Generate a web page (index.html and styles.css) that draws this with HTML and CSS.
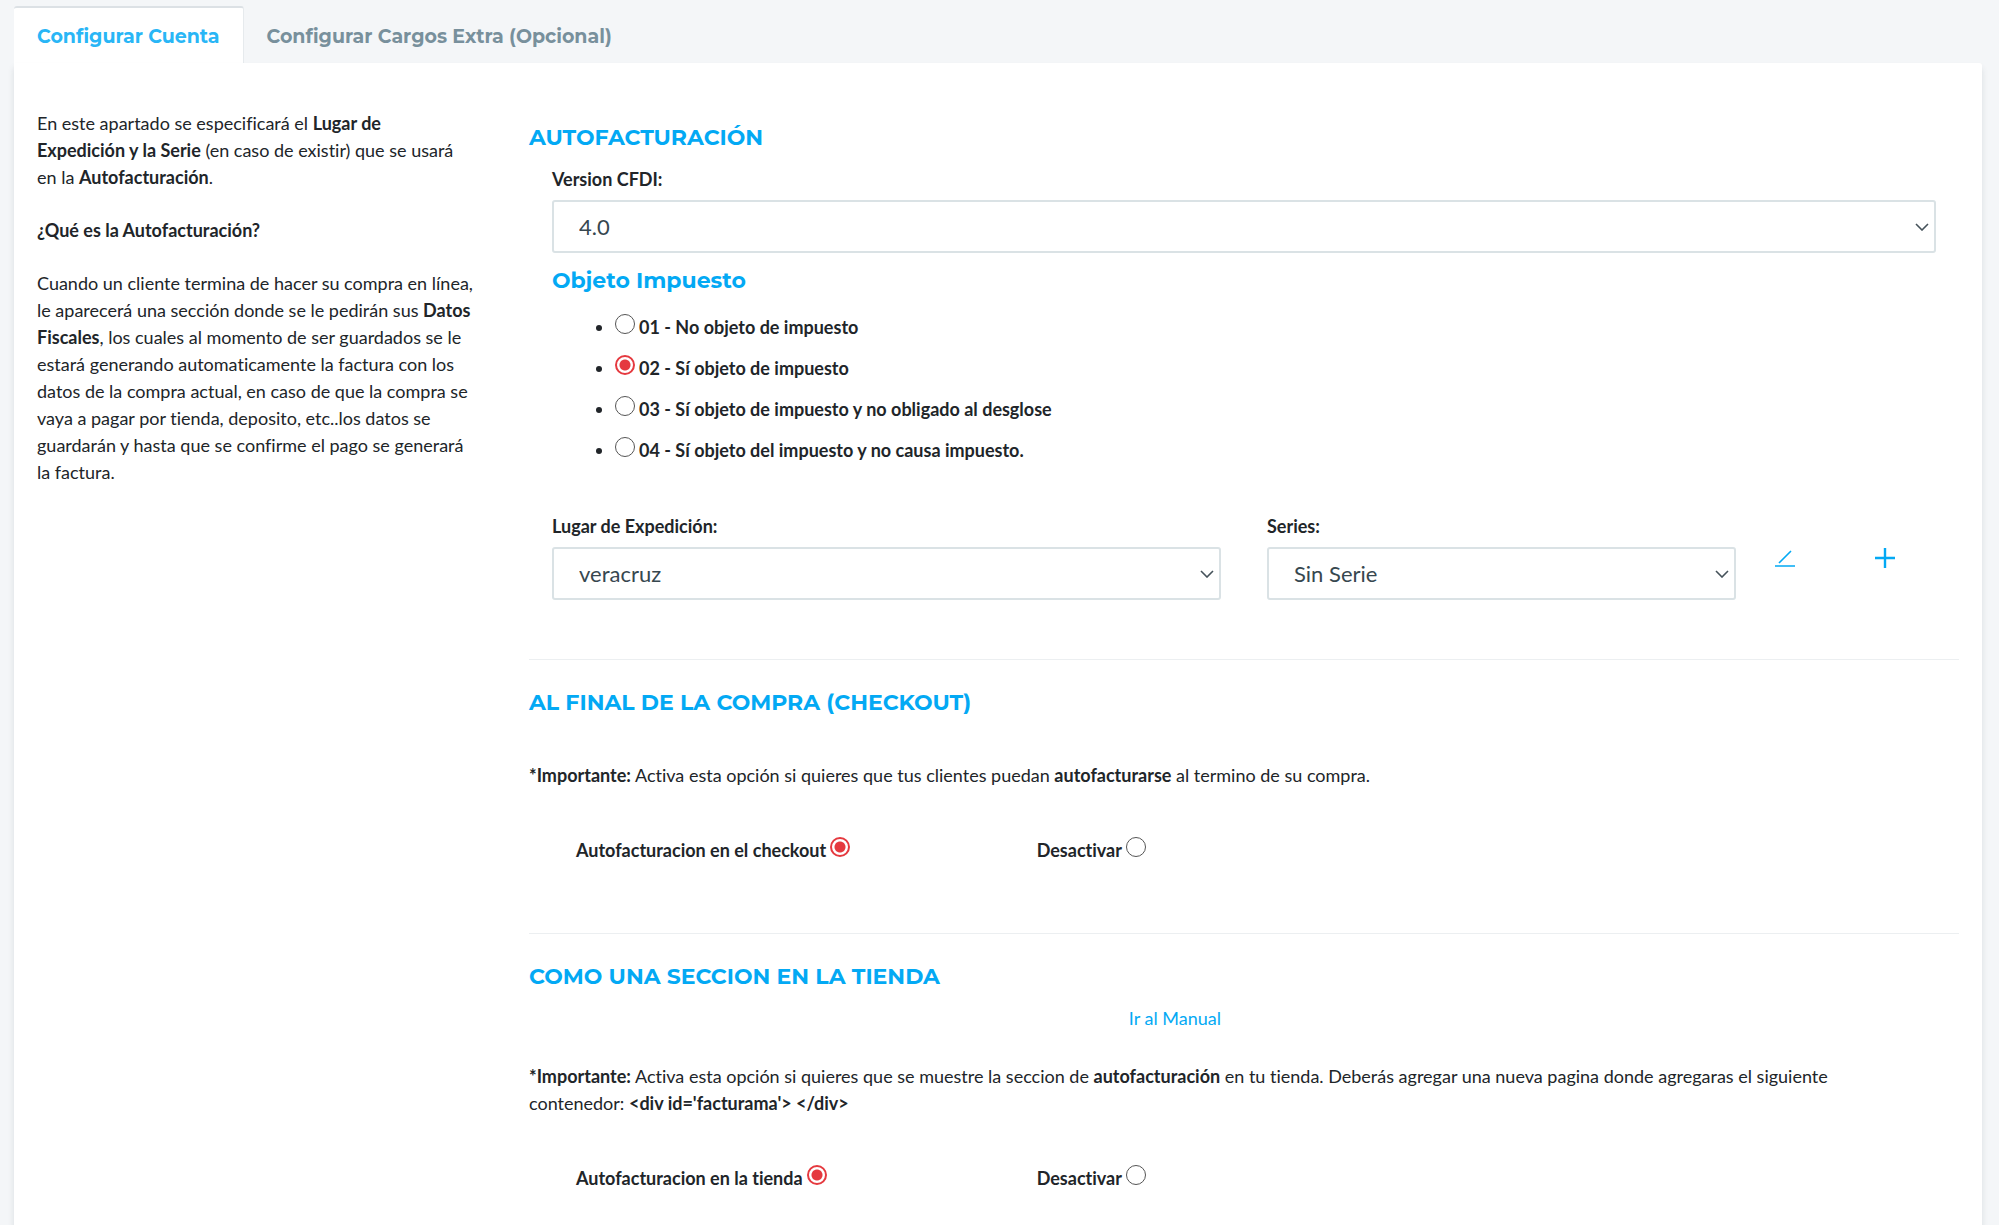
FILE: index.html
```html
<!DOCTYPE html>
<html lang="es">
<head>
  <meta charset="utf-8">
  <meta name="viewport" content="width=device-width, initial-scale=1">
  <title>Configurar Cuenta</title>
  <link rel="stylesheet" href="styles.css">
</head>
<body>
  <nav class="tabs">
    <a class="tab tab-active" href="#cuenta">Configurar Cuenta</a>
    <a class="tab" href="#cargos">Configurar Cargos Extra (Opcional)</a>
  </nav>

  <main class="card" id="cuenta">
    <aside class="help">
      <p>En este apartado se especificará el <b>Lugar de<br>Expedición y la Serie</b> (en caso de existir) que se usará<br>en la <b>Autofacturación</b>.</p>
      <p><b>¿Qué es la Autofacturación?</b></p>
      <p>Cuando un cliente termina de hacer su compra en línea, le aparecerá una sección donde se le pedirán sus <b>Datos Fiscales</b>, los cuales al momento de ser guardados se le estará generando automaticamente la factura con los datos de la compra actual, en caso de que la compra se vaya a pagar por tienda, deposito, etc..los datos se guardarán y hasta que se confirme el pago se generará<br>la factura.</p>
    </aside>

    <form class="content">
      <section class="section">
        <h2 class="title">AUTOFACTURACIÓN</h2>
        <div class="block">
          <label class="label" for="version">Version CFDI:</label>
          <div class="select-box">
            <select class="select" id="version"><option>4.0</option></select>
            <svg class="chevron" viewBox="0 0 14 8"><path d="M1 1l6 6 6-6"/></svg>
          </div>
          <h3 class="title subtitle">Objeto Impuesto</h3>
          <ul class="options">
            <li><label class="option"><input class="radio" type="radio" name="objeto"><span>01 - No objeto de impuesto</span></label></li>
            <li><label class="option"><input class="radio" type="radio" name="objeto" checked><span>02 - Sí objeto de impuesto</span></label></li>
            <li><label class="option"><input class="radio" type="radio" name="objeto"><span>03 - Sí objeto de impuesto y no obligado al desglose</span></label></li>
            <li><label class="option"><input class="radio" type="radio" name="objeto"><span>04 - Sí objeto del impuesto y no causa impuesto.</span></label></li>
          </ul>
        </div>
        <div class="series-row">
          <div class="field">
            <label class="label" for="lugar">Lugar de Expedición:</label>
            <div class="select-box">
              <select class="select" id="lugar"><option>veracruz</option></select>
              <svg class="chevron" viewBox="0 0 14 8"><path d="M1 1l6 6 6-6"/></svg>
            </div>
          </div>
          <div class="field">
            <label class="label" for="series">Series:</label>
            <div class="select-box">
              <select class="select" id="series"><option>Sin Serie</option></select>
              <svg class="chevron" viewBox="0 0 14 8"><path d="M1 1l6 6 6-6"/></svg>
            </div>
          </div>
          <button class="icon-button" type="button" aria-label="Editar serie">
            <svg class="icon" viewBox="0 0 22 22"><path d="M5 16L17 4M1 19h20"/></svg>
          </button>
          <button class="icon-button" type="button" aria-label="Agregar serie">
            <svg class="icon icon-add" viewBox="0 0 22 22"><path d="M1 11h20M11 1v20"/></svg>
          </button>
        </div>
      </section>

      <section class="section">
        <h2 class="title">AL FINAL DE LA COMPRA (CHECKOUT)</h2>
        <p class="note note-spaced"><b>*Importante:</b> Activa esta opción si quieres que tus clientes puedan <b>autofacturarse</b> al termino de su compra.</p>
        <div class="choices">
          <label class="option"><span>Autofacturacion en el checkout</span><input class="radio" type="radio" name="checkout" checked></label>
          <label class="option"><span>Desactivar</span><input class="radio" type="radio" name="checkout"></label>
        </div>
      </section>

      <section class="section">
        <h2 class="title">COMO UNA SECCION EN LA TIENDA</h2>
        <p class="manual"><a class="link" href="#manual">Ir al Manual</a></p>
        <p class="note"><b>*Importante:</b> Activa esta opción si quieres que se muestre la seccion de <b>autofacturación</b> en tu tienda. Deberás agregar una nueva pagina donde agregaras el siguiente<br>contenedor: <b>&lt;div id='facturama'&gt; &lt;/div&gt;</b></p>
        <div class="choices">
          <label class="option"><span>Autofacturacion en la tienda</span><input class="radio" type="radio" name="tienda" checked></label>
          <label class="option"><span>Desactivar</span><input class="radio" type="radio" name="tienda"></label>
        </div>
      </section>
    </form>
  </main>
</body>
</html>
```
FILE: styles.css
```css
* {
  box-sizing: border-box;
}

body {
  display: flex;
  flex-direction: column;
  min-height: 100vh;
  margin: 0;
  padding: 6px 17px 0 14px;
  background: #f4f6f8;
  color: #212529;
  font: 18px/27px Lato, "Open Sans", sans-serif;
  font-variant-ligatures: none;
}

h2, h3, p, ul {
  margin: 0;
}

.tabs {
  display: flex;
}

.tab {
  height: 57px;
  padding: 15px 23px 0;
  border-top: 2px solid transparent;
  color: #78909c;
  font: 700 19px/28px Montserrat, Inter, sans-serif;
  text-decoration: none;
}

.tab-active {
  border-top-color: #dce1e5;
  border-right: 1px solid #e6eaed;
  border-radius: 3px 3px 0 0;
  background: #fff;
  color: #29b6f6;
}

.card {
  display: grid;
  flex: 1;
  grid-template-columns: 1fr 3fr;
  padding: 47px 0 24px;
  border-radius: 0 3px 0 0;
  background: #fff;
  box-shadow: 0 5px 6px rgba(60, 72, 88, 0.14);
}

.help {
  display: flex;
  flex-direction: column;
  gap: 26px;
  padding: 0 23px;
}

.content {
  padding: 14px 23px 0;
}

.section + .section {
  margin-top: 59px;
  padding-top: 29px;
  border-top: 1px solid #eceff1;
}

.title {
  color: #03a9f4;
  font: 700 22px/28px Montserrat, Inter, sans-serif;
}

.block {
  padding: 0 23px;
}

.label {
  display: block;
  padding: 14px 0 7px;
  font-weight: 700;
}

.select-box {
  display: grid;
  align-items: center;
}

.select {
  grid-area: 1 / 1;
  width: 100%;
  height: 53px;
  padding: 0 25px;
  border: 2px solid #dae2e5;
  border-radius: 3px;
  appearance: none;
  background: #fff;
  color: #37474f;
  font: 22px/28px Lato, "Open Sans", sans-serif;
}

.chevron {
  grid-area: 1 / 1;
  justify-self: end;
  width: 14px;
  height: 8px;
  margin-right: 7px;
  fill: none;
  stroke: #45525a;
  stroke-width: 1.6;
  pointer-events: none;
}

.subtitle {
  padding: 14px 0 19px;
}

.options {
  padding: 0 0 21px 63px;
}

.options li {
  height: 41px;
}

.option {
  display: inline-flex;
  gap: 4px;
  font-weight: 700;
}

.radio {
  width: 20px;
  height: 20px;
  margin: 0;
  border: 1px solid #555;
  border-radius: 50%;
  appearance: none;
  background: #fff;
}

.radio:checked {
  border: 2px solid #e5393f;
  background: radial-gradient(circle, #e5393f 5px, #fff 6px);
}

.series-row {
  display: grid;
  grid-template-columns: 50% 36% 7% 7%;
  align-items: end;
}

.field {
  padding: 0 23px;
}

.icon-button {
  display: flex;
  align-items: flex-start;
  justify-content: center;
  width: 53px;
  height: 53px;
  padding: 0;
  border: 0;
  background: none;
}

.icon {
  width: 22px;
  height: 22px;
  fill: none;
  stroke: #03a9f4;
  stroke-width: 1.6;
}

.icon-add {
  stroke-width: 2.4;
}

.note-spaced {
  margin-top: 45px;
}

.choices {
  display: grid;
  grid-template-columns: repeat(3, 1fr);
  padding: 48px 24px 10px;
}

.choices .option {
  padding-left: 23px;
}

.manual {
  width: 50%;
  margin: 14px 0 31px;
  padding-right: 23px;
  text-align: right;
}

.link {
  color: #03a9f4;
  text-decoration: none;
}
```
